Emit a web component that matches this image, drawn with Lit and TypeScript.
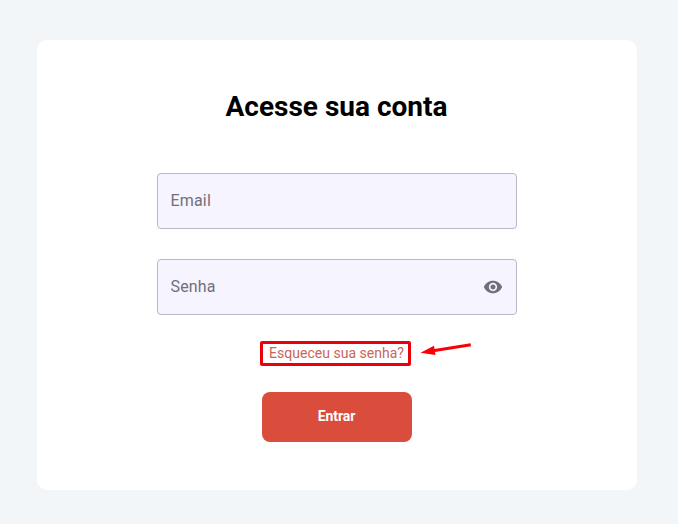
import { LitElement, html, css } from "lit";
import { customElement } from "lit/decorators.js";

@customElement("app-root")
export class AppRoot extends LitElement {
  static styles = css`
    :host { display: block; height: 524px; box-sizing: border-box; padding: 40px 41px 34px 37px; background: #f2f6f9; font-family: Roboto, "Liberation Sans", sans-serif; }
    * { box-sizing: border-box; }
    .card { width: 600px; height: 450px; border-radius: 10px; background: #fff; display: flex; flex-direction: column; align-items: center; padding-top: 50px; }
    h1 { margin: 0 1px 50px 0; font-size: 28px; line-height: 33px; font-weight: 700; color: #000; white-space: nowrap; }
    .field { width: 360px; height: 56px; border: 1px solid #bab8cb; border-radius: 4px; background: #f6f4fe; display: flex; align-items: center; justify-content: space-between; padding: 0 13px 0 12.5px; font-size: 16px; letter-spacing: .17px; color: #716f79; margin-bottom: 30px; }
    .label { padding-bottom: 2px; }
    .eye { width: 20px; height: 20px; display: block; fill: #716f77; }
    .row { position: relative; margin: -4px 3px 0 0; }
    .forgot { width: 151px; height: 25px; border: 3px solid #e8000b; border-radius: 2px; display: flex; align-items: center; padding: 0 0 2px 6px; color: #c9655a; font-size: 14px; letter-spacing: .02px; white-space: nowrap; }
    .arrow { position: absolute; left: 160px; top: 0; width: 52px; height: 18px; }
    .btn { width: 150px; height: 50px; margin-top: 26px; border: 0; border-radius: 8px; background: #da4d3d; color: #fff; font: 700 14px Roboto, sans-serif; letter-spacing: -.1px; padding: 0 1px 2px 0; }
  `;
  render() {
    return html`<main class="card">
      <h1>Acesse sua conta</h1>
      <div class="field"><span class="label">Email</span></div>
      <div class="field"><span class="label">Senha</span>
        <svg class="eye" viewBox="0 0 24 24"><path d="M12 4.5C7 4.5 2.73 7.61 1 12c1.73 4.39 6 7.5 11 7.5s9.27-3.11 11-7.5c-1.73-4.39-6-7.5-11-7.5zM12 17c-2.76 0-5-2.24-5-5s2.24-5 5-5 5 2.24 5 5-2.24 5-5 5zm0-8c-1.66 0-3 1.34-3 3s1.34 3 3 3 3-1.34 3-3-1.34-3-3-3z"/></svg>
      </div>
      <div class="row"><div class="forgot">Esqueceu sua senha?</div>
        <svg class="arrow" viewBox="0 0 52 18"><path d="M50.8 3.7L13 9.8" stroke="#fa0005" stroke-width="3"/><path d="M.5 11.7L14 4.8 15.5 14z" fill="#fa0005"/></svg>
      </div>
      <button class="btn">Entrar</button>
    </main>`;
  }
}
